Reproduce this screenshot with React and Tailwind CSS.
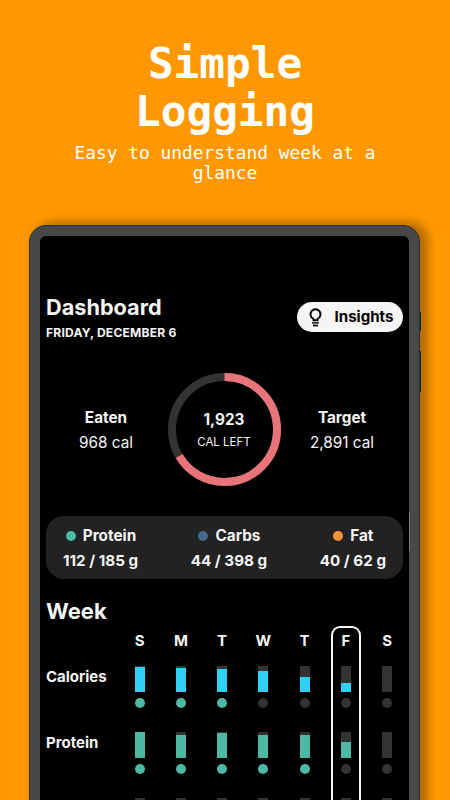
import React from "react";

const DAYS = ["S", "M", "T", "W", "T", "F", "S"];
const TODAY = 5;

const MACROS = [
  { name: "Protein", value: "112 / 185 g", dot: "bg-[#4db8a4]" },
  { name: "Carbs", value: "44 / 398 g", dot: "bg-[#466891]" },
  { name: "Fat", value: "40 / 62 g", dot: "bg-[#f79238]" },
];

// fill is a percentage of the day's target, hit marks the days on target
const ROWS = [
  {
    name: "Calories",
    color: "bg-[#2fcff8]",
    fill: [96, 89, 85, 81, 55, 35, 0],
    hit: [true, true, true, false, false, false, false],
  },
  {
    name: "Protein",
    color: "bg-[#4db8a4]",
    fill: [100, 85, 96, 88, 87, 62, 0],
    hit: [true, true, true, true, true, false, false],
  },
  {
    name: "",
    color: "bg-[#466891]",
    fill: [0, 0, 0, 0, 0, 0, 0],
    hit: [false, false, false, false, false, false, false],
  },
];

function BulbIcon() {
  return (
    <svg width="13" height="19" viewBox="0 0 13 19" fill="none" stroke="#000" strokeWidth="1.9">
      <path d="M4.4 12.2 V10.8 A5 5 0 1 1 8.6 10.8 V12.2 Z" strokeLinejoin="round" />
      <path d="M3 14.9 H10" strokeWidth="1.4" />
      <path d="M4 17.5 H9" strokeWidth="1.7" />
    </svg>
  );
}

function CalorieRing() {
  return (
    <div className="grid h-[113px] w-[113px] place-items-center">
      <svg className="col-start-1 row-start-1" width="113" height="113" viewBox="0 0 113 113" fill="none">
        <circle cx="56.5" cy="56.5" r="52.5" stroke="#333333" strokeWidth="8" />
        <circle
          cx="56.5"
          cy="56.5"
          r="52.5"
          stroke="#e87378"
          strokeWidth="8"
          pathLength="100"
          strokeDasharray="66.6 33.4"
          transform="rotate(-90 56.5 56.5)"
        />
      </svg>
      <div className="col-start-1 row-start-1 text-center">
        <p className="pt-[3px] text-[15.3px] leading-[22px] font-bold">1,923</p>
        <p className="text-[11.5px] leading-[22px]">CAL LEFT</p>
      </div>
    </div>
  );
}

function Stat({ label, value }) {
  return (
    <div className="w-[88px] text-center">
      <p className="text-[15.3px] leading-[25px] font-bold">{label}</p>
      <p className="text-[15.3px] leading-[25px]">{value}</p>
    </div>
  );
}

function Day({ row, index }) {
  return (
    <div className="flex flex-col items-center">
      <div className="flex h-[26.5px] w-[10px] flex-col justify-end bg-[#333333]">
        <div className={row.color} style={{ height: `${row.fill[index]}%` }} />
      </div>
      <div className={`mt-[6px] h-[10px] w-[10px] rounded-full ${row.hit[index] ? "bg-[#4db8a4]" : "bg-[#333333]"}`} />
    </div>
  );
}

function Week() {
  return (
    <section>
      <h2 className="mt-[18px] text-[22px] leading-[28px] font-bold">Week</h2>
      <div className="flex pt-px">
        <div className="w-[73px] shrink-0 pt-[41px]">
          {ROWS.map((row, index) => (
            <p key={index} className="h-[66px] text-[15px] leading-[20px] font-bold">
              {row.name}
            </p>
          ))}
        </div>
        {DAYS.map((day, index) => (
          <div key={index} className="flex w-[41.25px] shrink-0 justify-center">
            <div
              className={`h-[240px] w-[30px] rounded-t-[9px] border-2 pt-[3px] text-center ${
                index === TODAY ? "border-[#f5f5f5]" : "border-transparent"
              }`}
            >
              <p className="text-[15px] leading-[20px] font-bold">{day}</p>
              <div className="pt-[15px]">
                {ROWS.map((row, rowIndex) => (
                  <div key={rowIndex} className="h-[66px]">
                    <Day row={row} index={index} />
                  </div>
                ))}
              </div>
            </div>
          </div>
        ))}
      </div>
    </section>
  );
}

function Phone() {
  return (
    <div className="relative ml-[29px] mt-[225px] h-[640px] w-[391px]">
      {/* Side buttons */}
      <div className="absolute top-[87px] -right-[1px] h-[19px] w-[3px] bg-[#263b45]" />
      <div className="absolute top-[126px] -right-[1px] h-[41px] w-[3px] bg-[#263b45]" />
      <div className="relative h-full rounded-[17px] border border-[#263238] bg-[#484848] px-[10px] pt-[10px] shadow-[7px_-2px_10px_1px_rgba(0,0,0,0.3)]">
        <div className="h-full rounded-t-[6px] bg-black px-[6px] pt-[58px] text-[#f5f5f5]">
          <header className="flex justify-between">
            <div>
              <h1 className="text-[21.7px] leading-[26px] font-bold">Dashboard</h1>
              <p className="mt-[4px] text-[12.1px] leading-[18px] font-bold tracking-[0.2px]">FRIDAY, DECEMBER 6</p>
            </div>
            <button className="mt-[8px] flex h-[30px] w-[106px] items-center gap-[12.5px] rounded-full bg-[#f5f5f5] pl-[12px] text-[15.1px] font-bold text-black">
              <BulbIcon />
              Insights
            </button>
          </header>

          <div className="mt-[31px] flex items-center justify-between pr-[17px] pl-[16px]">
            <Stat label="Eaten" value="968 cal" />
            <CalorieRing />
            <Stat label="Target" value="2,891 cal" />
          </div>

          <div className="mt-[30px] flex h-[62.5px] justify-between rounded-[18px] bg-[#222222] px-[17px] pt-[7px] text-[15.3px] leading-[25px] font-bold">
            {MACROS.map((macro) => (
              <div key={macro.name}>
                <p className="flex items-center justify-center gap-[7px] pl-px">
                  <span className={`h-[10px] w-[10px] rounded-full ${macro.dot}`} />
                  {macro.name}
                </p>
                <p className="-mt-[0.5px] text-center text-[15.2px]">{macro.value}</p>
              </div>
            ))}
          </div>

          <Week />
        </div>
      </div>
      {/* Power key highlight */}
      <div className="absolute top-[287px] right-[10px] h-[39px] w-px bg-[#777777]" />
    </div>
  );
}

function App() {
  return (
    <div className="h-[800px] w-[450px] overflow-hidden bg-[#ff9800] font-['Inter',sans-serif]">
      <div className="grid">
        <div className="col-start-1 row-start-1 pt-[39px] text-center font-['DejaVu_Sans_Mono',monospace] text-white">
          <h1 className="text-[42.7px] leading-[48px] font-bold">
            Simple
            <br />
            Logging
          </h1>
          <p className="mt-[8px] text-[17.85px] leading-[20px]">
            Easy to understand week at a
            <br />
            glance
          </p>
        </div>
        <div className="col-start-1 row-start-1">
          <Phone />
        </div>
      </div>
    </div>
  );
}

export default App;
